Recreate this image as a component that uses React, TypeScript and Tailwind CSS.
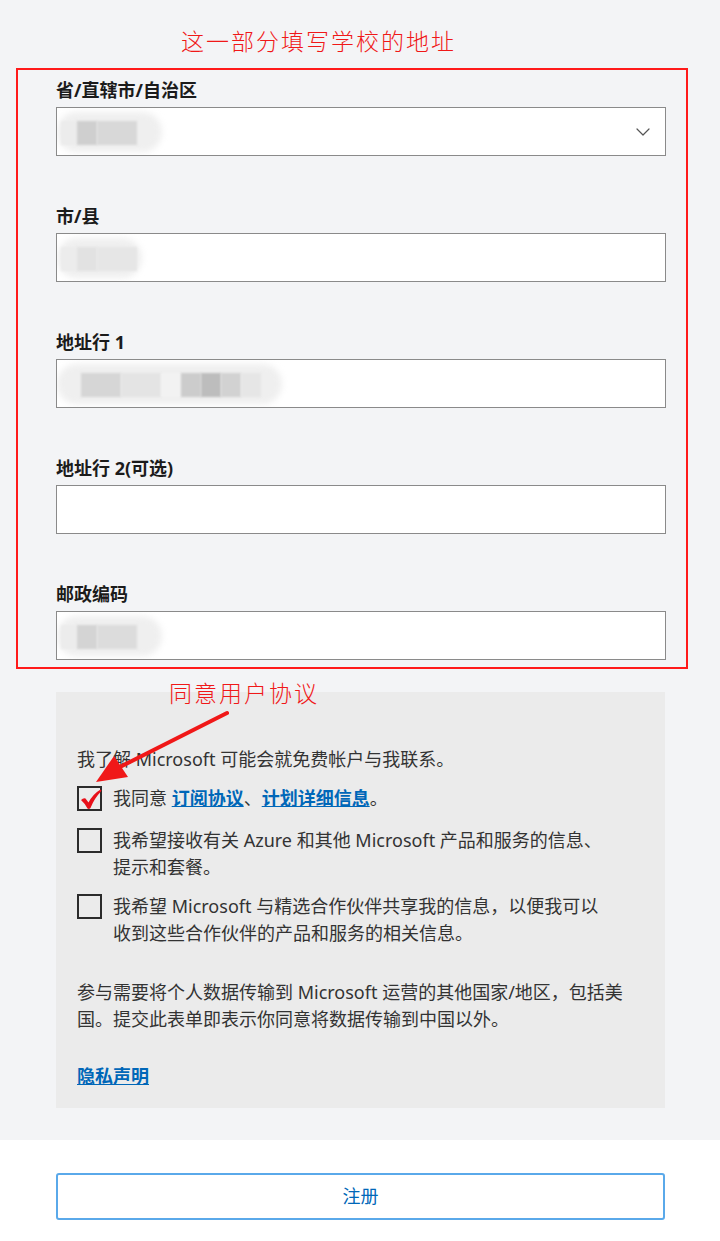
import { ChevronDown } from "lucide-react";

const FONT = { fontFamily: '"Noto Sans", "Noto Sans CJK SC", sans-serif' };

type Blur = { w: number; blocks: { x: number; w: number; c: string }[] };

const FIELDS: { label: string; select?: boolean; blur?: Blur }[] = [
  {
    label: "省/直辖市/自治区",
    select: true,
    blur: {
      w: 105,
      blocks: [
        { x: 4, w: 16, c: "#ececec" },
        { x: 20, w: 20, c: "#cfcfcf" },
        { x: 40, w: 40, c: "#d8d8d8" },
      ],
    },
  },
  {
    label: "市/县",
    blur: {
      w: 85,
      blocks: [
        { x: 4, w: 16, c: "#ececec" },
        { x: 20, w: 20, c: "#e2e2e2" },
        { x: 40, w: 40, c: "#e6e6e6" },
      ],
    },
  },
  {
    label: "地址行 1",
    blur: {
      w: 225,
      blocks: [
        { x: 24, w: 40, c: "#d6d6d6" },
        { x: 64, w: 40, c: "#e4e4e4" },
        { x: 104, w: 20, c: "#f2f2f2" },
        { x: 124, w: 20, c: "#cccccc" },
        { x: 144, w: 20, c: "#bdbdbd" },
        { x: 164, w: 20, c: "#d2d2d2" },
        { x: 184, w: 20, c: "#e6e6e6" },
      ],
    },
  },
  { label: "地址行 2(可选)" },
  {
    label: "邮政编码",
    blur: {
      w: 105,
      blocks: [
        { x: 4, w: 16, c: "#ececec" },
        { x: 20, w: 20, c: "#d4d4d4" },
        { x: 40, w: 40, c: "#dcdcdc" },
      ],
    },
  },
];

function Blurred({ blur }: { blur: Blur }) {
  return (
    <div className="absolute left-0 top-[4px] h-[40px]" style={{ width: blur.w }}>
      <div className="absolute inset-0 rounded-full bg-[#efefef] blur-[3px]" />
      {blur.blocks.map((b, i) => (
        <div
          key={i}
          className="absolute top-[9px] h-[24px] blur-[1px]"
          style={{ left: b.x, width: b.w, background: b.c }}
        />
      ))}
    </div>
  );
}

function Checkbox({ checked }: { checked?: boolean }) {
  return (
    <div className="relative mt-[1px] w-[25px] h-[25px] shrink-0 border-2 border-[#2b2b2b]">
      {checked && (
        <svg className="absolute left-[1px] top-[0px]" width="22" height="22" viewBox="0 0 22 22">
          <path
            d="M1 12 Q3.5 9.5 5.5 10.5 L8.5 14.5 Q13 6 20.5 1.5 Q22 2 21 3.5 Q14.5 10 10.5 20 Q9 21.5 7.5 20.5 Q5 15.5 1 12 Z"
            fill="#e8101a"
          />
        </svg>
      )}
    </div>
  );
}

export default function App() {
  return (
    <div className="relative w-[720px] h-[1241px] overflow-hidden bg-white text-[#333]" style={FONT}>
      <div className="bg-[#f3f4f6] pb-[32px]">
        <div className="h-[68px] pl-[181px] pt-[26px]">
          <div className="text-[23px] leading-[30px] font-light tracking-[2px] text-[#f01818]">
            这一部分填写学校的地址
          </div>
        </div>

        <div className="mx-[16px] w-[672px] h-[601px] border-2 border-[#ff1a1a] pt-[8px] pl-[38px]">
          {FIELDS.map((f, i) => (
            <div key={f.label} className={i < FIELDS.length - 1 ? "mb-[48px]" : ""}>
              <div className="text-[18px] leading-[24px] font-bold text-[#1b1b1b]">{f.label}</div>
              <div className="relative mt-[5px] w-[610px] h-[49px] bg-white border border-[#8a8a8a] overflow-hidden">
                {f.blur && <Blurred blur={f.blur} />}
                {f.select && (
                  <ChevronDown
                    size={24}
                    strokeWidth={1.2}
                    className="absolute right-[10px] top-[12px] text-[#555]"
                  />
                )}
              </div>
            </div>
          ))}
        </div>

        <div className="mt-[23px] mx-[56px] w-[609px] bg-[#ebebeb] pt-[54px] pb-[18px] pl-[21px] pr-[20px] text-[18px] leading-[27px] text-[#333]">
          <div>我了解 Microsoft 可能会就免费帐户与我联系。</div>

          <div className="mt-[12px] flex items-start gap-[11px]">
            <Checkbox checked />
            <div>
              我同意{" "}
              <span className="text-[#0067b8] font-bold underline">订阅协议</span>、
              <span className="text-[#0067b8] font-bold underline">计划详细信息</span>。
            </div>
          </div>

          <div className="mt-[15px] flex items-start gap-[11px]">
            <Checkbox />
            <div>
              我希望接收有关 Azure 和其他 Microsoft 产品和服务的信息、
              <br />
              提示和套餐。
            </div>
          </div>

          <div className="mt-[12px] flex items-start gap-[11px]">
            <Checkbox />
            <div>
              我希望 Microsoft 与精选合作伙伴共享我的信息，以便我可以
              <br />
              收到这些合作伙伴的产品和服务的相关信息。
            </div>
          </div>

          <div className="mt-[32px]">
            参与需要将个人数据传输到 Microsoft 运营的其他国家/地区，包括美
            <br />
            国。提交此表单即表示你同意将数据传输到中国以外。
          </div>

          <div className="mt-[30px]">
            <span className="text-[#0067b8] font-bold underline">隐私声明</span>
          </div>
        </div>
      </div>

      <div className="pt-[33px] pl-[56px]">
        <button className="w-[609px] h-[47px] rounded-[3px] border-2 border-[#5aa9ea] bg-white text-[18px] text-[#0067b8]">
          注册
        </button>
      </div>

      <div className="absolute left-[169px] top-[678px] text-[23px] leading-[30px] font-light tracking-[2px] text-[#f01818]">
        同意用户协议
      </div>

      <svg className="absolute left-0 top-0 pointer-events-none" width="720" height="1241">
        <line x1="227" y1="713" x2="112" y2="771" stroke="#f01818" strokeWidth="4" strokeLinecap="round" />
        <polygon points="96,782 114,756 128,777" fill="#f01818" />
      </svg>
    </div>
  );
}
